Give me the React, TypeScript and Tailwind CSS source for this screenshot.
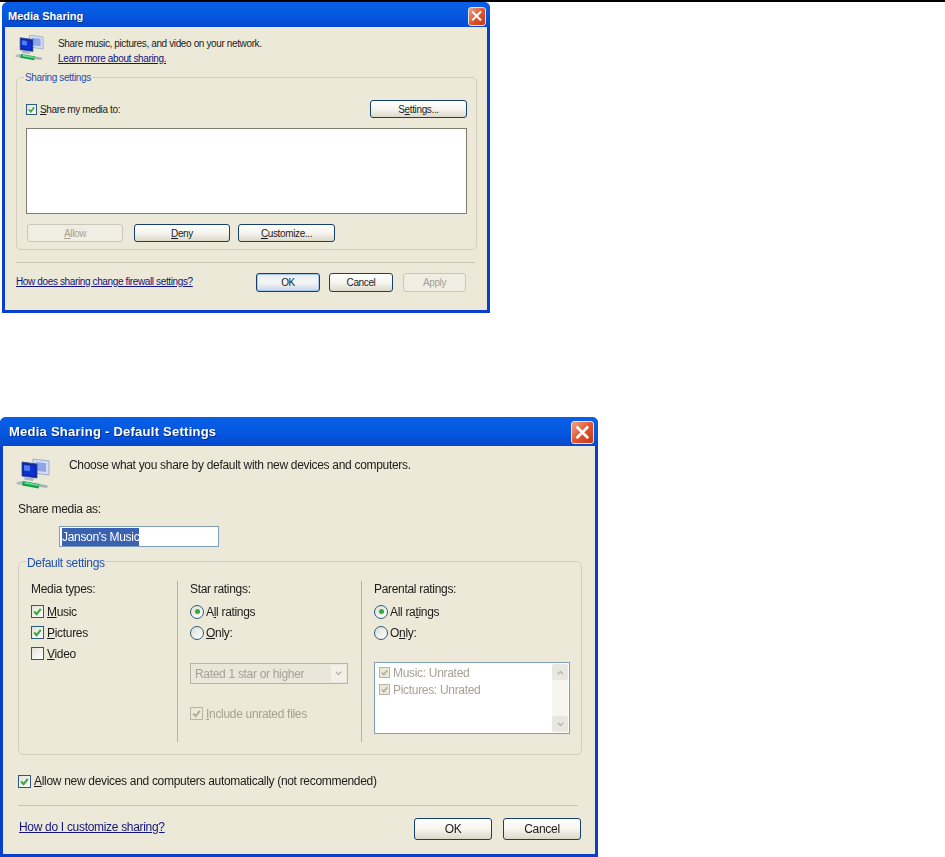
import type { ReactNode } from 'react';

function NetIcon({ className }: { className: string }) {
  return (
    <svg viewBox="0 0 34 32" className={className}>
      <path d="M17 1l16 2v14l-16-2z" fill="#d5def2" stroke="#8d9cc4" strokeWidth="0.8" />
      <path d="M20 4l10 1.3v8.7l-10-1.3z" fill="#8ea6e6" />
      <path d="M6 4l15 2v14L6 18z" fill="#10299a" stroke="#2f4aa0" strokeWidth="0.8" />
      <path d="M8 6.5l11 1.5v10L8 16.5z" fill="#0b2fd0" />
      <path d="M8 7l6 .8v5.4L8 12.4z" fill="#4b7df0" />
      <path d="M9 19l9 1.5-1 2.5-9-1.5z" fill="#aab4c8" />
      <ellipse cx="5" cy="25" rx="4.5" ry="1.8" fill="#b0bcbc" />
      <path d="M7 23l17 3-1.5 4.5L6 27.5z" fill="#15a04f" />
      <path d="M9 24l14 2.5-.6 1.6L8.4 25.6z" fill="#73e095" />
      <path d="M24 26l8 1.5-1 2.5-8.5-1.2z" fill="#a7b2b8" />
    </svg>
  );
}

function CloseButton({ className }: { className: string }) {
  return (
    <div className={`flex items-center justify-center rounded-[3px] border border-[#e9e4dc] bg-gradient-to-br from-[#f0a088] via-[#e0552e] to-[#c23a1a] ${className}`}>
      <svg viewBox="0 0 12 12" className="h-[70%] w-[70%]">
        <path d="M2 2l8 8M10 2l-8 8" stroke="#fff" strokeWidth="2.2" strokeLinecap="square" />
      </svg>
    </div>
  );
}

function Dialog({ title, big, className, children }: { title: string; big?: boolean; className: string; children: ReactNode }) {
  return (
    <div className={`flex flex-col overflow-hidden rounded-t-[6px] bg-[#0a3fca] ${className}`}>
      <div className={`flex shrink-0 items-center justify-between bg-gradient-to-b from-[#0a5fe8] via-[#0558e0] to-[#0349cf] font-['Liberation_Sans',sans-serif] font-bold text-white ${big ? 'h-[29px] pl-[9px] pr-[4px] pt-[1px] text-[13px] tracking-[0.25px]' : 'h-[25px] pl-[6px] pr-[4px] pt-[3px] text-[11px]'}`}>
        <span className="[text-shadow:1px_1px_0_#0a2f8a]">{title}</span>
        <CloseButton className={big ? 'h-[23px] w-[23px]' : 'h-[19px] w-[18px]'} />
      </div>
      <div className={`mx-[3px] mb-[3px] flex-1 bg-[#ece9d8] ${big ? 'text-[12px] tracking-[-0.31px]' : 'text-[10px] tracking-[-0.37px]'} font-['Liberation_Sans',sans-serif] text-[#1c1c1c]`}>
        {children}
      </div>
    </div>
  );
}

function Btn({ label, dim, primary, className }: { label: ReactNode; dim?: boolean; primary?: boolean; className: string }) {
  return (
    <div
      className={`flex items-center justify-center rounded-[3px] border ${
        dim
          ? 'border-[#c9c7ba] bg-[#f0eee3] text-[#a5a294]'
          : primary
            ? 'border-[#15406e] bg-gradient-to-b from-[#e6eefa] via-[#f6f6f2] to-[#c4d6ee] text-[#1c1c1c] shadow-[inset_0_0_0_1px_#a9c4ea]'
            : 'border-[#15406e] bg-gradient-to-b from-white via-[#f6f5ee] to-[#dcd9cb] text-[#1c1c1c]'
      } ${className}`}
    >
      {label}
    </div>
  );
}

function Check({ on, dim, className }: { on?: boolean; dim?: boolean; className: string }) {
  return (
    <div className={`flex shrink-0 items-center justify-center border ${dim ? 'border-[#b5b4a8] bg-[#ece9d8]' : 'border-[#2c5a7c] bg-gradient-to-br from-[#e2e2da] to-white'} ${className}`}>
      {on && (
        <svg viewBox="0 0 10 10" className="h-full w-full">
          <path d="M2 5l2.2 2.4L8 2.6" fill="none" stroke={dim ? '#b0afa4' : '#38a838'} strokeWidth="1.9" />
        </svg>
      )}
    </div>
  );
}

function Radio({ on }: { on?: boolean }) {
  return (
    <div className="flex h-[14px] w-[14px] shrink-0 items-center justify-center rounded-full border border-[#2c5a7c] bg-gradient-to-br from-[#dedfd8] to-white">
      {on && <div className="h-[5px] w-[5px] rounded-full bg-[#35a83a]" />}
    </div>
  );
}

function Group({ legend, className, children }: { legend: string; className: string; children: ReactNode }) {
  return (
    <div className={`relative rounded-[5px] border border-[#d0d0bf] ${className}`}>
      <span className="absolute -top-[8px] left-[7px] bg-[#ece9d8] px-[1px] text-[#1f4fb0]">{legend}</span>
      {children}
    </div>
  );
}

function U({ children }: { children: string }) {
  return <span className="underline">{children}</span>;
}

function CheckRow({ on, children }: { on?: boolean; children: ReactNode }) {
  return (
    <div className="flex h-[21px] items-center gap-[3px]">
      <Check on={on} className="h-[13px] w-[13px]" />
      <span>{children}</span>
    </div>
  );
}

function RadioRow({ on, children }: { on?: boolean; children: ReactNode }) {
  return (
    <div className="flex h-[21px] items-center gap-[2px]">
      <Radio on={on} />
      <span>{children}</span>
    </div>
  );
}

export default function App() {
  return (
    <div className="h-[857px] w-[945px] overflow-hidden bg-white">
      <div className="h-[2px] bg-black" />

      {/* First dialog */}
      <Dialog title="Media Sharing" className="ml-[2px] h-[311px] w-[488px]">
        <div className="flex h-[50px] pl-[10px] pt-[6px]">
          <NetIcon className="h-[30px] w-[29px]" />
          <div className="ml-[14px] mt-[3px] leading-[15px]">
            <div>Share music, pictures, and video on your network.</div>
            <div className="text-[#15147f] underline">Learn more about sharing.</div>
          </div>
        </div>
        <Group legend="Sharing settings" className="ml-[11px] h-[173px] w-[461px] px-[9px] pt-[22px]">
          <div className="flex h-[18px] items-center justify-between">
            <div className="flex items-center gap-[3px]">
              <Check on className="h-[11px] w-[11px]" />
              <span><U>S</U>hare my media to:</span>
            </div>
            <Btn label={<span>S<U>e</U>ttings...</span>} className="h-[18px] w-[97px]" />
          </div>
          <div className="mt-[10px] h-[86px] w-[441px] border border-[#7f7d70] bg-white" />
          <div className="ml-[1px] mt-[10px] flex">
            <Btn dim label={<span><U>A</U>llow</span>} className="h-[18px] w-[96px]" />
            <Btn label={<span><U>D</U>eny</span>} className="ml-[11px] h-[18px] w-[96px]" />
            <Btn label={<span><U>C</U>ustomize...</span>} className="ml-[8px] h-[18px] w-[97px]" />
          </div>
        </Group>
        <div className="ml-[11px] mt-[12px] h-px w-[459px] bg-[#c8c6b6]" />
        <div className="ml-[11px] mt-[10px] flex w-[450px] items-center justify-between">
          <span className="-mt-[3px] text-[#15147f] underline">How does sharing change firewall settings?</span>
          <div className="flex">
            <Btn primary label="OK" className="h-[19px] w-[64px]" />
            <Btn label="Cancel" className="ml-[9px] h-[19px] w-[64px]" />
            <Btn dim label="Apply" className="ml-[10px] h-[19px] w-[63px]" />
          </div>
        </div>
      </Dialog>

      {/* Second dialog */}
      <Dialog big title="Media Sharing - Default Settings" className="mt-[104px] h-[440px] w-[598px] blur-[0.3px]">
        <div className="flex h-[52px] pl-[13px] pt-[11px]">
          <NetIcon className="h-[34px] w-[34px]" />
          <div className="ml-[19px] mt-[1px] leading-[14px]">Choose what you share by default with new devices and computers.</div>
        </div>
        <div className="ml-[15px] mt-[3px] leading-[16px]">Share media as:</div>
        <div className="ml-[56px] mt-[9px] flex h-[21px] w-[160px] items-center border border-[#7f9db9] bg-white pl-[2px]">
          <span className="bg-[#3a62b0] text-white">Janson's Music</span>
        </div>
        <Group legend="Default settings" className="ml-[15px] mt-[14px] h-[194px] w-[564px] pl-[12px] pt-[19px]">
          <div className="flex h-[161px]">
            <div className="w-[147px] border-r border-[#b5b4a5]">
              <div className="mb-[4px] leading-[16px]">Media types:</div>
              <CheckRow on><U>M</U>usic</CheckRow>
              <CheckRow on><U>P</U>ictures</CheckRow>
              <CheckRow><U>V</U>ideo</CheckRow>
            </div>
            <div className="w-[184px] border-r border-[#b5b4a5] pl-[12px]">
              <div className="mb-[4px] leading-[16px]">Star ratings:</div>
              <RadioRow on>A<U>l</U>l ratings</RadioRow>
              <RadioRow><U>O</U>nly:</RadioRow>
              <div className="mt-[20px] flex h-[21px] w-[158px] items-center justify-between border border-[#b5b4a5] bg-[#e9e7da] pl-[4px] pr-[1px] text-[#a5a294]">
                <span>Rated 1 star or higher</span>
                <div className="flex h-[17px] w-[15px] items-center justify-center bg-[#f2f0e8]">
                  <svg viewBox="0 0 10 10" className="h-[9px] w-[9px]">
                    <path d="M2 3l3 3 3-3" fill="none" stroke="#b5b4a5" strokeWidth="1.6" />
                  </svg>
                </div>
              </div>
              <div className="mt-[19px] flex h-[21px] items-center gap-[3px] text-[#a5a294]">
                <Check on dim className="h-[13px] w-[13px]" />
                <span><U>I</U>nclude unrated files</span>
              </div>
            </div>
            <div className="pl-[12px]">
              <div className="mb-[4px] leading-[16px]">Parental ratings:</div>
              <RadioRow on>All ra<U>t</U>ings</RadioRow>
              <RadioRow>O<U>n</U>ly:</RadioRow>
              <div className="mt-[19px] flex h-[72px] w-[196px] justify-between border border-[#7f9db9] bg-white pl-[4px] pr-[1px] pt-[1px] text-[#a5a294]">
                <div>
                  <div className="flex h-[17px] items-center gap-[3px]"><Check on dim className="h-[11px] w-[11px]" />Music: Unrated</div>
                  <div className="flex h-[17px] items-center gap-[3px]"><Check on dim className="h-[11px] w-[11px]" />Pictures: Unrated</div>
                </div>
                <div className="mb-px flex w-[16px] flex-col justify-between bg-[#f6f5ef]">
                  <div className="flex h-[16px] items-center justify-center rounded-[2px] bg-[#e8e8e0]">
                    <svg viewBox="0 0 10 10" className="h-[9px] w-[9px]"><path d="M2 7l3-3 3 3" fill="none" stroke="#b5b4a5" strokeWidth="1.6" /></svg>
                  </div>
                  <div className="flex h-[16px] items-center justify-center rounded-[2px] bg-[#e8e8e0]">
                    <svg viewBox="0 0 10 10" className="h-[9px] w-[9px]"><path d="M2 3l3 3 3-3" fill="none" stroke="#b5b4a5" strokeWidth="1.6" /></svg>
                  </div>
                </div>
              </div>
            </div>
          </div>
        </Group>
        <div className="ml-[15px] mt-[19px] flex h-[14px] items-center gap-[3px]">
          <Check on className="h-[13px] w-[13px]" />
          <span><U>A</U>llow new devices and computers automatically (not recommended)</span>
        </div>
        <div className="ml-[15px] mt-[17px] h-px w-[560px] bg-[#c8c6b6]" />
        <div className="ml-[16px] mt-[12px] flex w-[562px] items-center justify-between">
          <span className="-mt-[4px] text-[#15147f] underline">How do I customize sharing?</span>
          <div className="flex gap-[11px]">
            <Btn label="OK" className="h-[22px] w-[78px]" />
            <Btn label="Cancel" className="h-[22px] w-[78px]" />
          </div>
        </div>
      </Dialog>
    </div>
  );
}
